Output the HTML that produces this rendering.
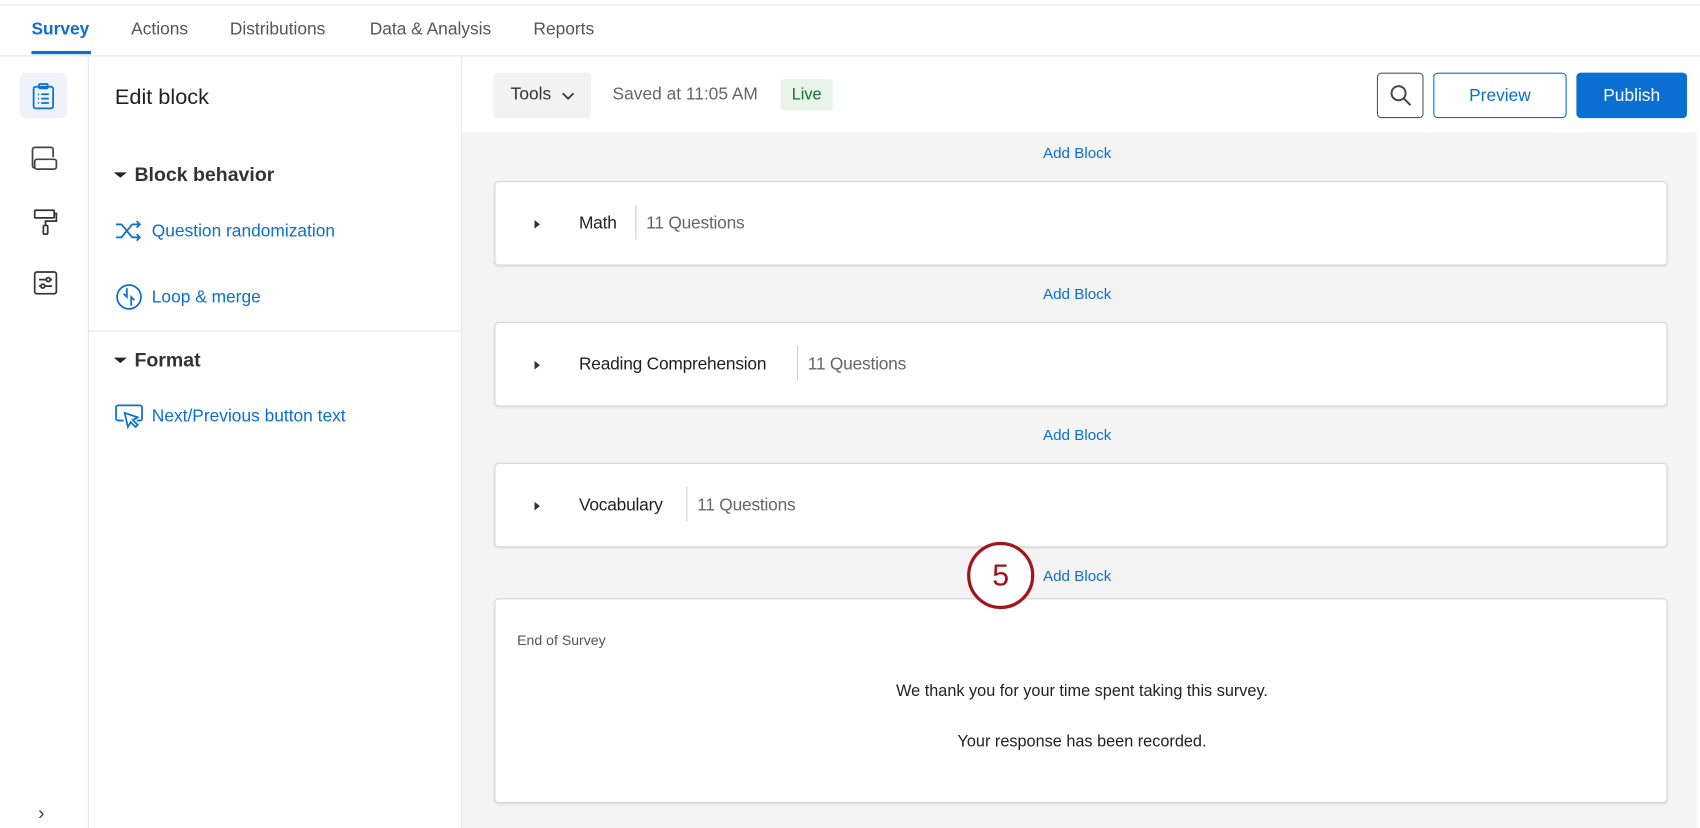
<!DOCTYPE html>
<html><head><meta charset="utf-8"><style>
*{box-sizing:border-box;margin:0;padding:0}
html,body{width:1700px;height:828px;overflow:hidden;background:#fff}
#w{width:1568px;height:764px;transform:scale(1.08418,1.0838);transform-origin:0 0;position:relative;font-family:"Liberation Sans",Arial,sans-serif;color:#222}
.a{position:absolute}
.nav{top:19px;font-size:16px;color:#555}
.blue{color:#0b6ed1}
.card{position:absolute;left:456px;width:1082px;background:#fff;border:1px solid #d6d6d6;border-radius:4px;box-shadow:0 1px 2px rgba(0,0,0,.08)}
.ab{position:absolute;left:962px;font-size:14px;color:#0b6ed1;top:0}
.bt{font-size:16px;color:#222;position:absolute;top:30px;letter-spacing:-0.2px}
.q{font-size:16px;color:#666;position:absolute;top:30px;padding-left:10px;letter-spacing:-0.2px}
.q:before{content:"";position:absolute;left:0;top:-9px;height:32px;width:1px;background:#ccc}
.tri{position:absolute;left:36px;top:35px;width:0;height:0;border-left:5px solid #333;border-top:4px solid transparent;border-bottom:4px solid transparent}
</style></head><body><div id="w">
<div class="a" style="left:0;top:4px;width:1568px;height:1px;background:#e6e6e6"></div>
<div class="a nav" style="left:29px;color:#0b6ed1;font-weight:bold">Survey</div>
<div class="a" style="left:29px;top:47px;width:55px;height:3px;background:#0b6ed1"></div>
<div class="a nav" style="left:121px">Actions</div>
<div class="a nav" style="left:212px">Distributions</div>
<div class="a nav" style="left:341px">Data &amp; Analysis</div>
<div class="a nav" style="left:492px">Reports</div>
<div class="a" style="left:0;top:51px;width:1568px;height:1px;background:#e4e4e4"></div>
<div class="a" style="left:81px;top:52px;width:1px;height:712px;background:#e6e6e6"></div>
<div class="a" style="left:18px;top:67px;width:44px;height:42px;background:#eef3fa;border-radius:6px"></div>
<svg class="a" style="left:28px;top:76px" width="24" height="26" viewBox="0 0 24 26" fill="none" stroke="#0b6ed1" stroke-width="1.6"><rect x="3" y="4" width="18" height="20" rx="2"/><rect x="8" y="1.5" width="8" height="4" rx="1"/><path d="M7 11h1M7 15h1M7 19h1M10 11h7M10 15h7M10 19h7"/></svg>
<svg class="a" style="left:28px;top:133px" width="26" height="26" viewBox="0 0 26 26" fill="none" stroke="#444" stroke-width="1.6"><path d="M21 12V5a2 2 0 0 0-2-2H4a2 2 0 0 0-2 2v15a2 2 0 0 0 2 2"/><rect x="4" y="14" width="20" height="9" rx="2"/></svg>
<svg class="a" style="left:30px;top:192px" width="24" height="26" viewBox="0 0 24 26" fill="none" stroke="#333" stroke-width="1.6"><rect x="2" y="2" width="18" height="7" rx="1"/><path d="M20 5h2v7H12v4"/><rect x="10" y="16" width="4" height="8" rx="1"/></svg>
<svg class="a" style="left:31px;top:250px" width="22" height="22" viewBox="0 0 22 22" fill="none" stroke="#333" stroke-width="1.6"><rect x="1" y="1" width="20" height="20" rx="2"/><path d="M5 8h7M15 8h2M5 14h2M10 14h7"/><circle cx="13.5" cy="8" r="1.8"/><circle cx="8.5" cy="14" r="1.8"/></svg>
<div class="a" style="left:35px;top:740px;font-size:18px;color:#444">›</div>
<div class="a" style="left:425px;top:52px;width:1px;height:712px;background:#e6e6e6"></div>
<div class="a" style="left:106px;top:79px;font-size:20px;color:#222">Edit block</div>
<div class="a" style="left:105px;top:159px;width:0;height:0;border-top:5px solid #222;border-left:6px solid transparent;border-right:6px solid transparent"></div>
<div class="a" style="left:124px;top:151px;font-size:18px;font-weight:bold;color:#333">Block behavior</div>
<svg class="a" style="left:106px;top:202px" width="26" height="22" viewBox="0 0 26 22" fill="none" stroke="#0b6ed1" stroke-width="1.6"><path d="M1 5h5l10 12h7M1 17h5l10-12h7M20 2l3 3-3 3M20 14l3 3-3 3"/></svg>
<div class="a blue" style="left:140px;top:205px;font-size:16px">Question randomization</div>
<svg class="a" style="left:106px;top:261px" width="26" height="26" viewBox="0 0 26 26" fill="none" stroke="#0b6ed1" stroke-width="1.6"><circle cx="13" cy="13" r="11"/><path d="M11 5v8l-3-3M15 21v-8l3 3"/></svg>
<div class="a blue" style="left:140px;top:266px;font-size:16px">Loop &amp; merge</div>
<div class="a" style="left:82px;top:305px;width:343px;height:1px;background:#e6e6e6"></div>
<div class="a" style="left:105px;top:330px;width:0;height:0;border-top:5px solid #222;border-left:6px solid transparent;border-right:6px solid transparent"></div>
<div class="a" style="left:124px;top:322px;font-size:18px;font-weight:bold;color:#333">Format</div>
<svg class="a" style="left:106px;top:373px" width="26" height="24" viewBox="0 0 26 24" fill="none" stroke="#0b6ed1" stroke-width="1.6"><path d="M8 15H3a2 2 0 0 1-2-2V3a2 2 0 0 1 2-2h20a2 2 0 0 1 2 2v10a2 2 0 0 1-2 2h-3"/><path d="M9 8l3 13 2.5-4.5L19 21l2-2-4.5-4.5L21 12z"/></svg>
<div class="a blue" style="left:140px;top:376px;font-size:16px">Next/Previous button text</div>
<div class="a" style="left:426px;top:122px;width:1139px;height:642px;background:#f4f4f4"></div>
<div class="a" style="left:455px;top:67px;width:90px;height:42px;background:#f2f2f2;border-radius:4px"></div>
<div class="a" style="left:471px;top:79px;font-size:16px;color:#333">Tools</div>
<svg class="a" style="left:517px;top:84px" width="14" height="10" viewBox="0 0 14 10" fill="none" stroke="#333" stroke-width="1.6"><path d="M2 2l5 5 5-5"/></svg>
<div class="a" style="left:565px;top:79px;font-size:16px;color:#666">Saved at 11:05 AM</div>
<div class="a" style="left:720px;top:73px;width:48px;height:29px;background:#e8f3ea;border-radius:3px;color:#1c6b2d;font-size:15px;text-align:center;line-height:30px">Live</div>
<div class="a" style="left:1270px;top:67px;width:43px;height:42px;border:1.5px solid #555;border-radius:4px"></div>
<svg class="a" style="left:1281px;top:77px" width="22" height="22" viewBox="0 0 22 22" fill="none" stroke="#444" stroke-width="1.8"><circle cx="9" cy="9" r="6.5"/><path d="M14 14l6 6"/></svg>
<div class="a" style="left:1322px;top:67px;width:123px;height:42px;border:1.5px solid #0b6ed1;border-radius:4px;color:#0b6ed1;font-size:16px;text-align:center;line-height:41px">Preview</div>
<div class="a" style="left:1454px;top:67px;width:102px;height:42px;background:#0b6ed1;border-radius:4px;color:#fff;font-size:16px;text-align:center;line-height:43px">Publish</div>
<div class="ab" style="top:133px">Add Block</div>
<div class="card" style="top:167px;height:78px"><div class="tri"></div><div class="bt" style="left:77px">Math</div><div class="q" style="left:129px">11 Questions</div></div>
<div class="ab" style="top:263px">Add Block</div>
<div class="card" style="top:297px;height:78px"><div class="tri"></div><div class="bt" style="left:77px">Reading Comprehension</div><div class="q" style="left:278px">11 Questions</div></div>
<div class="ab" style="top:393px">Add Block</div>
<div class="card" style="top:427px;height:78px"><div class="tri"></div><div class="bt" style="left:77px">Vocabulary</div><div class="q" style="left:176px">11 Questions</div></div>
<div class="ab" style="top:523px">Add Block</div>
<div class="card" style="top:552px;height:189px">
<div class="a" style="left:20px;top:30px;font-size:13px;color:#555">End of Survey</div>
<div class="a" style="left:0;width:1082px;top:76px;font-size:15px;text-align:center;color:#222">We thank you for your time spent taking this survey.</div>
<div class="a" style="left:0;width:1082px;top:123px;font-size:15px;text-align:center;color:#222">Your response has been recorded.</div>
</div>
<div class="a" style="left:892px;top:500px;width:62px;height:62px;border:3px solid #a3131f;border-radius:50%;background:#fff;color:#a3131f;font-size:28px;text-align:center;line-height:56px;z-index:5">5</div>
</div></body></html>
